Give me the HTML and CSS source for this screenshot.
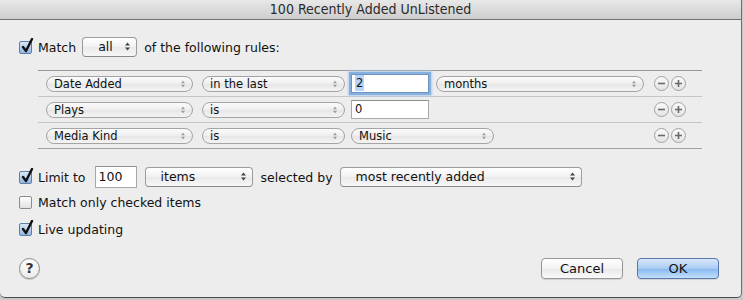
FILE: index.html
```html
<!DOCTYPE html>
<html lang="en">
<head>
  <meta charset="UTF-8" />
  <title>100 Recently Added UnListened</title>
  <link rel="stylesheet" href="styles.css">
</head>
<body>
  <div class="window">
    <div class="titlebar">100 Recently Added UnListened</div>

    <div class="content">
      <div class="line match-line">
        <span class="check checked"><svg viewBox="0 0 14 16"><path d="M3 9 L6 13 L12 1" /></svg></span>
        <span class="label">Match</span>
        <span class="popup popup-all">all<svg class="arrows" viewBox="0 0 7 11"><path d="M3.5 0 L7 4 L0 4 Z M0 7 L7 7 L3.5 11 Z" /></svg></span>
        <span class="label">of the following rules:</span>
      </div>

      <div class="rules">
        <div class="rule">
          <span class="pill pill-field">Date Added<svg class="arrows" viewBox="0 0 7 11"><path d="M3.5 0 L7 4 L0 4 Z M0 7 L7 7 L3.5 11 Z" /></svg></span>
          <span class="pill pill-op">in the last<svg class="arrows" viewBox="0 0 7 11"><path d="M3.5 0 L7 4 L0 4 Z M0 7 L7 7 L3.5 11 Z" /></svg></span>
          <span class="field field-value focused"><span class="selected">2</span></span>
          <span class="pill pill-unit">months<svg class="arrows" viewBox="0 0 7 11"><path d="M3.5 0 L7 4 L0 4 Z M0 7 L7 7 L3.5 11 Z" /></svg></span>
          <span class="round-btns">
            <span class="round"><svg viewBox="0 0 13 13"><path d="M3 6.5 H10" /></svg></span>
            <span class="round"><svg viewBox="0 0 13 13"><path d="M3 6.5 H10 M6.5 3 V10" /></svg></span>
          </span>
        </div>
        <div class="rule">
          <span class="pill pill-field">Plays<svg class="arrows" viewBox="0 0 7 11"><path d="M3.5 0 L7 4 L0 4 Z M0 7 L7 7 L3.5 11 Z" /></svg></span>
          <span class="pill pill-op">is<svg class="arrows" viewBox="0 0 7 11"><path d="M3.5 0 L7 4 L0 4 Z M0 7 L7 7 L3.5 11 Z" /></svg></span>
          <span class="field field-value">0</span>
          <span class="round-btns">
            <span class="round"><svg viewBox="0 0 13 13"><path d="M3 6.5 H10" /></svg></span>
            <span class="round"><svg viewBox="0 0 13 13"><path d="M3 6.5 H10 M6.5 3 V10" /></svg></span>
          </span>
        </div>
        <div class="rule">
          <span class="pill pill-field">Media Kind<svg class="arrows" viewBox="0 0 7 11"><path d="M3.5 0 L7 4 L0 4 Z M0 7 L7 7 L3.5 11 Z" /></svg></span>
          <span class="pill pill-op">is<svg class="arrows" viewBox="0 0 7 11"><path d="M3.5 0 L7 4 L0 4 Z M0 7 L7 7 L3.5 11 Z" /></svg></span>
          <span class="pill pill-kind">Music<svg class="arrows" viewBox="0 0 7 11"><path d="M3.5 0 L7 4 L0 4 Z M0 7 L7 7 L3.5 11 Z" /></svg></span>
          <span class="round-btns">
            <span class="round"><svg viewBox="0 0 13 13"><path d="M3 6.5 H10" /></svg></span>
            <span class="round"><svg viewBox="0 0 13 13"><path d="M3 6.5 H10 M6.5 3 V10" /></svg></span>
          </span>
        </div>
      </div>

      <div class="line limit-line">
        <span class="check checked"><svg viewBox="0 0 14 16"><path d="M3 9 L6 13 L12 1" /></svg></span>
        <span class="label">Limit to</span>
        <span class="field field-limit">100</span>
        <span class="popup popup-items">items<svg class="arrows" viewBox="0 0 7 11"><path d="M3.5 0 L7 4 L0 4 Z M0 7 L7 7 L3.5 11 Z" /></svg></span>
        <span class="label">selected by</span>
        <span class="popup popup-order">most recently added<svg class="arrows" viewBox="0 0 7 11"><path d="M3.5 0 L7 4 L0 4 Z M0 7 L7 7 L3.5 11 Z" /></svg></span>
      </div>

      <div class="line option-line">
        <span class="check"></span>
        <span class="label">Match only checked items</span>
      </div>

      <div class="line option-line live-line">
        <span class="check checked"><svg viewBox="0 0 14 16"><path d="M3 9 L6 13 L12 1" /></svg></span>
        <span class="label">Live updating</span>
      </div>

      <div class="footer">
        <span class="help">?</span>
        <span class="button">Cancel</span>
        <span class="button default">OK</span>
      </div>
    </div>
  </div>
</body>
</html>
```

FILE: styles.css
```css
body {
  margin: 0;
  background: #c9c9c9;
  font-family: 'DejaVu Sans', 'Lucida Grande', sans-serif;
  font-size: 12.5px;
  color: #111;
}

.window {
  width: 741px;
  height: 297px;
  background: #ededed;
  border-right: 1px solid #6e6e6e;
  border-bottom: 1px solid #4a4a4a;
  border-radius: 0 0 5px 5px;
  overflow: hidden;
  display: flex;
  flex-direction: column;
}

.titlebar {
  height: 19px;
  line-height: 19px;
  text-align: center;
  font-family: 'Liberation Sans Narrow', 'DejaVu Sans Condensed', sans-serif;
  font-size: 14px;
  color: #2a2a2a;
  background: linear-gradient(#e8e8e8, #cdcdcd);
  border-bottom: 1px solid #6f6f6f;
}

.content {
  flex: 1;
  display: flex;
  flex-direction: column;
  padding: 0 22px 0 19px;
}

.line {
  display: flex;
  align-items: center;
}

.label {
  white-space: nowrap;
}

.match-line {
  height: 20px;
  margin-top: 17px;
}

.match-line .label:last-child {
  margin-left: 7px;
}

/* checkboxes */
.check {
  position: relative;
  width: 11px;
  height: 11px;
  border: 1px solid #8c8c8c;
  border-radius: 2px;
  background: linear-gradient(#ffffff, #e2e2e2);
  flex: none;
  margin-right: 6px;
}

.check.checked {
  border-color: #5d7ea9;
  background: linear-gradient(#dbe8f7, #93b6e2);
}

.check svg {
  position: absolute;
  left: 0;
  top: -4px;
  width: 14px;
  height: 16px;
  fill: none;
  stroke: #111;
  stroke-width: 2.4;
  stroke-linecap: round;
  stroke-linejoin: round;
}

/* popup buttons */
.popup {
  position: relative;
  height: 18px;
  line-height: 18px;
  border: 1px solid #9c9c9c;
  border-bottom-color: #8a8a8a;
  border-radius: 4px;
  background: linear-gradient(#ffffff, #f1f1f1 50%, #e9e9e9 51%, #f7f7f7);
  padding-left: 15px;
  flex: none;
  white-space: nowrap;
}

.popup .arrows {
  position: absolute;
  right: 6px;
  top: 4px;
  width: 5px;
  height: 9px;
  fill: #444;
}

.popup-all {
  width: 38px;
  margin-left: 6px;
}

.popup-items {
  width: 91px;
  margin-left: 8px;
  margin-right: 8px;
}

.popup-order {
  width: 225px;
  margin-left: 7px;
}

.pill {
  position: relative;
  height: 14px;
  line-height: 14px;
  border: 1px solid #a4a4a4;
  border-radius: 8px;
  background: linear-gradient(#fbfbfb, #eeeeee 50%, #e6e6e6 51%, #f4f4f4);
  padding-left: 7px;
  font-size: 11.5px;
  flex: none;
  white-space: nowrap;
}

.pill .arrows {
  position: absolute;
  right: 7px;
  top: 3px;
  width: 4px;
  height: 8px;
  fill: #9a9a9a;
}

.pill-field {
  width: 138px;
  margin-right: 9px;
}

.pill-op {
  width: 134px;
  margin-right: 6px;
}

.pill-unit {
  width: 199px;
  margin-left: 7px;
}

.pill-kind {
  width: 134px;
}

/* text fields */
.field {
  height: 17px;
  line-height: 17px;
  background: #fff;
  border: 1px solid #a8a8a8;
  border-top-color: #8e8e8e;
  padding-left: 3px;
  flex: none;
}

.field-value {
  width: 73px;
  font-size: 11.5px;
}

.field.focused {
  border-color: #6c93c2;
  box-shadow: 0 0 0 2px #86b0dd, 0 0 2px 3px #b4cfec;
}

.selected {
  background: #b5d4fb;
  padding: 1px 1px;
}

.field-limit {
  width: 37px;
  height: 20px;
  line-height: 20px;
  margin-left: 9px;
  font-size: 12.5px;
}

/* rules list */
.rules {
  margin: 13px 17px 0 19px;
  border-top: 1px solid #999;
  border-bottom: 1px solid #a0a0a0;
}

.rule {
  height: 25px;
  display: flex;
  align-items: center;
  padding-left: 8px;
}

.rule + .rule {
  border-top: 1px solid #c6c6c6;
}

.round-btns {
  margin-left: auto;
  margin-right: 16px;
  display: flex;
  gap: 2px;
}

.round {
  width: 13px;
  height: 13px;
  border: 1px solid #a2a2a2;
  border-radius: 50%;
  background: linear-gradient(#fafafa, #e4e4e4);
}

.round svg {
  display: block;
  width: 13px;
  height: 13px;
  stroke: #6a6a6a;
  stroke-width: 1.6;
}

.limit-line {
  height: 22px;
  margin-top: 17px;
}

.option-line {
  height: 16px;
  margin-top: 6px;
}

.live-line {
  margin-top: 11px;
}

/* footer buttons */
.footer {
  display: flex;
  align-items: center;
  margin-top: 21px;
}

.help {
  width: 19px;
  height: 19px;
  border: 1px solid #8e8e8e;
  border-radius: 50%;
  background: radial-gradient(circle at 50% 30%, #ffffff, #e6e6e6);
  box-shadow: 0 1px 1px rgba(0,0,0,0.2);
  text-align: center;
  line-height: 19px;
  font-size: 14px;
  font-weight: bold;
  color: #333;
}

.button {
  width: 80px;
  height: 19px;
  line-height: 19px;
  border: 1px solid #979797;
  border-radius: 4px;
  background: linear-gradient(#ffffff, #f3f3f3 50%, #e8e8e8 51%, #fafafa);
  text-align: center;
  font-size: 13px;
  box-shadow: 0 1px 1px rgba(0,0,0,0.12);
}

.footer .button:nth-child(2) {
  margin-left: auto;
  margin-right: 1px;
}

.button.default {
  margin-left: 13px;
  border-color: #5777ad;
  background: linear-gradient(#d9e9fb, #a9cbf2 50%, #86b8f0 51%, #c2e0fc);
}
```
